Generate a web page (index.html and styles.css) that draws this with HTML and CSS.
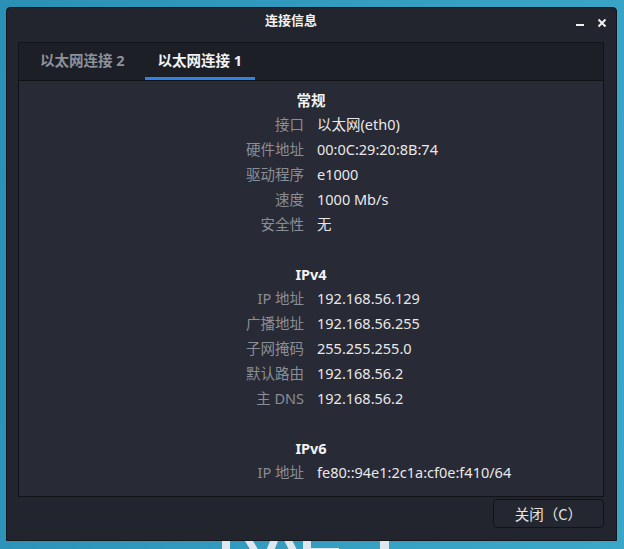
FILE: index.html
```html
<!DOCTYPE html>
<html lang="zh-CN">
<head>
<meta charset="utf-8">
<title>连接信息</title>
<link rel="stylesheet" href="styles.css">
</head>
<body>
<svg class="wallpaper-logo" width="200" height="20" viewBox="0 0 200 20">
  <rect x="22" y="0" width="8" height="20" fill="#dfe7ec"/>
  <polygon points="42,0 50,0 62,20 54,20" fill="#dfe7ec"/>
  <polygon points="64,20 72,20 80,0 72,0" fill="#dfe7ec"/>
  <polygon points="82,0 90,0 100,20 92,20" fill="#dfe7ec"/>
  <rect x="103" y="0" width="8" height="20" fill="#dfe7ec"/>
  <rect x="111" y="12" width="28" height="8" fill="#dfe7ec"/>
  <rect x="180" y="0" width="9" height="20" fill="#dfe7ec"/>
</svg>
<div class="window">
  <div class="titlebar">
    <div class="title">连接信息</div>
    <div class="controls">
      <svg class="ctl" width="10" height="10" viewBox="0 0 10 10"><rect x="1" y="6" width="8" height="2" fill="#f0f0f0"/></svg>
      <svg class="ctl" width="10" height="10" viewBox="0 0 10 10"><path d="M1.5 1.5 L8.5 8.5 M8.5 1.5 L1.5 8.5" stroke="#f0f0f0" stroke-width="2" fill="none"/></svg>
    </div>
  </div>
  <div class="notebook">
    <div class="tabs">
      <div class="tab">以太网连接 2</div>
      <div class="tab active">以太网连接 1</div>
    </div>
    <div class="content">
      <div class="section-title">常规</div>
      <div class="row"><span class="label">接口</span><span class="value">以太网(eth0)</span></div>
      <div class="row"><span class="label">硬件地址</span><span class="value">00:0C:29:20:8B:74</span></div>
      <div class="row"><span class="label">驱动程序</span><span class="value">e1000</span></div>
      <div class="row"><span class="label">速度</span><span class="value">1000 Mb/s</span></div>
      <div class="row"><span class="label">安全性</span><span class="value">无</span></div>
      <div class="spacer"></div>
      <div class="section-title">IPv4</div>
      <div class="row"><span class="label">IP 地址</span><span class="value">192.168.56.129</span></div>
      <div class="row"><span class="label">广播地址</span><span class="value">192.168.56.255</span></div>
      <div class="row"><span class="label">子网掩码</span><span class="value">255.255.255.0</span></div>
      <div class="row"><span class="label">默认路由</span><span class="value">192.168.56.2</span></div>
      <div class="row"><span class="label">主 DNS</span><span class="value">192.168.56.2</span></div>
      <div class="spacer"></div>
      <div class="section-title">IPv6</div>
      <div class="row"><span class="label">IP 地址</span><span class="value">fe80::94e1:2c1a:cf0e:f410/64</span></div>
    </div>
  </div>
  <div class="actions">
    <button class="btn">关闭（C）</button>
  </div>
</div>
</body>
</html>
```
FILE: styles.css
```css
html, body {
  margin: 0;
  padding: 0;
  width: 624px;
  height: 549px;
  overflow: hidden;
}
body {
  position: relative;
  background: linear-gradient(100deg, #2b90b6 0%, #3199be 40%, #37a2c4 70%, #3aa6c8 100%);
  font-family: "Noto Sans", "Noto Sans CJK SC", sans-serif;
  font-size: 14.5px;
  padding-top: 7px;
  box-sizing: border-box;
}
.wallpaper-logo {
  position: absolute;
  left: 200px;
  top: 536px;
}
.window {
  position: relative;
  margin-left: 6px;
  width: 611px;
  height: 534px;
  box-sizing: border-box;
  background: #23252e;
  border: 1px solid #14161b;
  border-radius: 4px 4px 0 0;
  display: flex;
  flex-direction: column;
}
.titlebar {
  height: 34px;
  display: flex;
  align-items: flex-start;
  position: relative;
}
.title {
  width: 568px;
  text-align: center;
  color: #f2f2f2;
  font-weight: bold;
  font-size: 13px;
  line-height: 16px;
  padding-top: 4px;
}
.controls {
  display: flex;
  gap: 12px;
  padding-top: 10px;
  padding-left: 0;
}
.ctl { display: block; }
.notebook {
  margin: 0 12px 0 11px;
  height: 455px;
  box-sizing: border-box;
  border: 1px solid #121318;
  display: flex;
  flex-direction: column;
  overflow: hidden;
}
.tabs {
  height: 38px;
  box-sizing: border-box;
  background: #1d1f27;
  border-bottom: 1px solid #121318;
  display: flex;
  gap: 7px;
  padding-left: 8px;
}
.tab {
  padding: 0 13px;
  line-height: 35px;
  color: #8e9197;
  font-weight: bold;
  border-bottom: 3px solid transparent;
}
.tab.active {
  color: #f2f2f2;
  border-bottom-color: #3082e6;
}
.content {
  flex: 1;
  background: #282a35;
  padding-top: 7px;
}
.section-title {
  text-align: center;
  color: #f2f2f2;
  font-weight: bold;
  line-height: 24px;
  height: 24px;
}
.row {
  display: flex;
  gap: 13px;
  line-height: 25px;
  height: 25px;
}
.label {
  width: 285px;
  text-align: right;
  color: #8a8e96;
}
.value {
  color: #e8e8e8;
}
.spacer { height: 25px; }
.actions {
  display: flex;
  justify-content: flex-end;
  padding: 2px 12px 0 0;
}
.btn {
  width: 111px;
  height: 29px;
  box-sizing: border-box;
  background: #242630;
  border: 1px solid #121318;
  border-radius: 4px;
  color: #e6e6e6;
  font-family: "Noto Sans CJK SC", sans-serif;
  font-size: 14.5px;
  padding: 0;
}
```
